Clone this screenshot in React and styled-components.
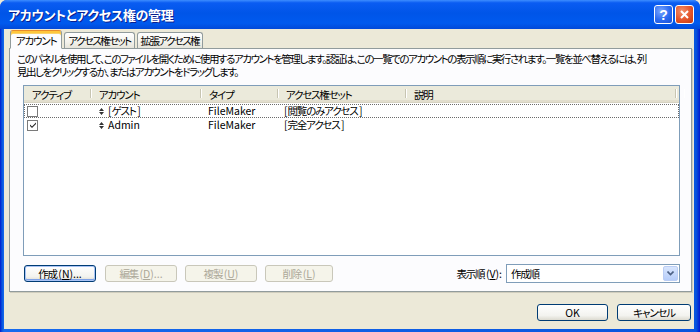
import React from 'react'
import styled, { createGlobalStyle } from 'styled-components'

const GlobalStyle = createGlobalStyle`
  html, body {
    margin: 0;
    padding: 0;
    background: #ece9d8;
  }
  body {
    font-family: "Noto Sans CJK JP", "Liberation Sans", sans-serif;
    font-size: 10.5px;
    letter-spacing: -1.2px;
    font-feature-settings: "palt";
    color: #000;
  }
`

const Window = styled.div`
  width: 700px;
  height: 332px;
  display: flex;
  flex-direction: column;
  background: #0a43d8;
  border-radius: 7px 7px 0 0;
  overflow: hidden;
`

const TitleBar = styled.div`
  height: 29px;
  flex: none;
  display: flex;
  align-items: center;
  padding: 0 6px 0 8px;
  background: linear-gradient(
    to bottom,
    #3d8dff 0%,
    #0a5cf2 10%,
    #0055e8 45%,
    #005aee 80%,
    #0149d8 100%
  );
  color: #fff;
`

const Title = styled.div`
  flex: 1;
  font-size: 13px;
  font-weight: bold;
  letter-spacing: -0.3px;
  text-shadow: 1px 1px 0 #0a1f8f;
`

const CaptionButtons = styled.div`
  display: flex;
  gap: 2px;
`

const CaptionButton = styled.div`
  width: 17px;
  height: 17px;
  border: 1px solid #fff;
  border-radius: 3px;
  display: flex;
  align-items: center;
  justify-content: center;
  color: #fff;
  font-family: "Liberation Sans", sans-serif;
  font-weight: bold;
  font-size: 14px;
  letter-spacing: 0;
  background: ${p => p.$close
    ? 'radial-gradient(circle at 35% 30%, #f2906c 0%, #e4542a 55%, #c23a12 100%)'
    : 'radial-gradient(circle at 35% 30%, #7aa6ff 0%, #2b6af0 55%, #1a4fd6 100%)'};
`

const Frame = styled.div`
  flex: 1;
  min-height: 0;
  display: flex;
  padding: 0 6px 3px 4px;
  background: linear-gradient(to right, #0019cf 0, #0855dd 2px, #166aee 4px, #0855dd calc(100% - 4px), #0019cf 100%);
`

const Client = styled.div`
  flex: 1;
  min-width: 0;
  display: flex;
  flex-direction: column;
  background: #ece9d8;
  padding: 1px 2px 0 5px;
`

const TabStrip = styled.div`
  display: flex;
  align-items: flex-end;
  height: 19px;
  margin-bottom: -1px;
  padding-left: 1px;
  position: relative;
  z-index: 1;
`

const Tab = styled.div`
  box-sizing: border-box;
  height: ${p => (p.$active ? 19 : 16)}px;
  margin: ${p => (p.$active ? '0' : '0 0 1px 2px')};
  padding: 0 ${p => (p.$active ? 5 : 3)}px;
  padding-top: ${p => (p.$active ? 2 : 0)}px;
  border: 1px solid #919b9c;
  border-bottom: ${p => (p.$active ? '1px solid #fcfcfe' : 'none')};
  border-top-color: ${p => (p.$active ? '#e68b2c' : '#919b9c')};
  border-radius: 3px 3px 0 0;
  background: ${p => (p.$active ? '#fcfcfe' : 'linear-gradient(#ffffff, #f3f2ec 60%, #e6e4da)')};
  box-shadow: ${p => (p.$active ? 'inset 0 2px 0 #ffc73c, inset 0 3px 0 #f9d46e' : 'none')};
  display: flex;
  align-items: center;
  letter-spacing: ${p => (p.$active ? '-1.2px' : '-1.6px')};
  white-space: nowrap;
`

const Panel = styled.div`
  height: 244px;
  min-width: 0;
  box-sizing: border-box;
  border: 1px solid #919b9c;
  background: #fcfcfe;
  box-shadow: 1px 1px 0 #d0cdbd;
  padding: 3px 11px 0 7px;
  display: flex;
  flex-direction: column;
  overflow: hidden;
`

const Description = styled.div`
  line-height: 13px;
  letter-spacing: -1.45px;
  white-space: nowrap;
`

const Latin = styled.span`
  letter-spacing: 0;
  margin-left: ${p => (p.$after ? 1.5 : 0)}px;
`

const ListView = styled.div`
  margin: 7px 0 0 6px;
  height: 171px;
  box-sizing: border-box;
  border: 1px solid #7f9db9;
  background: #fff;
`

const COLS = '67px 110px 77px 128px 270px 1fr'

const Header = styled.div`
  display: grid;
  grid-template-columns: ${COLS};
  height: 17px;
  box-sizing: border-box;
  background: #ebeadb;
  border-bottom: 1px solid #d6d2c2;
  box-shadow: inset 0 -2px 0 #e2decd;
`

const HeaderCell = styled.div`
  display: flex;
  align-items: center;
  padding-left: 8px;
  white-space: nowrap;
  position: relative;
  &::after {
    content: "";
    position: absolute;
    right: 0;
    top: 3px;
    bottom: 4px;
    width: 1px;
    background: ${p => (p.$last ? 'transparent' : '#c7c5b2')};
    box-shadow: 1px 0 0 #fff;
  }
`

const Row = styled.div`
  display: grid;
  grid-template-columns: ${COLS};
  height: 14px;
  margin-top: ${p => (p.$first ? 1 : 0)}px;
  outline: ${p => (p.$focus ? '1px dotted #6b6b6b' : 'none')};
  outline-offset: -1px;
`

const Cell = styled.div`
  display: flex;
  align-items: center;
  gap: 4px;
  padding-left: ${p => p.$pad ?? 6}px;
  letter-spacing: ${p => (p.$latin ? '0' : '-1.2px')};
  white-space: nowrap;
  line-height: 14px;
`

const CheckBox = styled.div`
  width: 9px;
  height: 9px;
  border: 1px solid #7a7a7a;
  background: #fff;
  display: flex;
  align-items: center;
  justify-content: center;
`

const ButtonBar = styled.div`
  display: flex;
  align-items: center;
  margin: 8px 0 0 7px;
`

const PushButton = styled.div`
  box-sizing: border-box;
  flex: none;
  width: ${p => p.$w}px;
  height: 17px;
  margin-right: ${p => p.$gap ?? 0}px;
  border: 1px solid ${p => (p.$disabled ? '#c9c7ba' : '#003c74')};
  border-radius: 3px;
  background: ${p => (p.$disabled ? '#f5f4ea' : 'linear-gradient(#ffffff, #f3f3ef 70%, #dcdad0)')};
  box-shadow: ${p => (p.$default ? 'inset 0 0 0 1px #a9c3f5, inset 0 -1px 0 1px #7fa2e7' : 'none')};
  color: ${p => (p.$disabled ? '#aca899' : '#000')};
  display: flex;
  align-items: center;
  justify-content: center;
  letter-spacing: ${p => (p.$latin ? '0' : '-1.2px')};
  white-space: nowrap;
  u {
    text-decoration: underline;
  }
`

const Spacer = styled.div`
  flex: 1;
`

const SortLabel = styled.div`
  margin-right: 4px;
  u {
    text-decoration: underline;
  }
`

const Combo = styled.div`
  box-sizing: border-box;
  width: 174px;
  height: 19px;
  border: 1px solid #7f9db9;
  background: #fff;
  display: flex;
  align-items: center;
  padding: 1px;
`

const ComboText = styled.div`
  flex: 1;
  padding-left: 3px;
`

const ComboArrow = styled.div`
  width: 15px;
  height: 15px;
  box-sizing: border-box;
  border: 1px solid #bacdf5;
  border-radius: 2px;
  background: linear-gradient(#d8e5fd, #b6cdfa);
  display: flex;
  align-items: center;
  justify-content: center;
`

const Footer = styled.div`
  display: flex;
  justify-content: flex-end;
  margin-top: 12px;
  padding-right: 1px;
`

const Handle = () => (
  <svg width="5" height="7" viewBox="0 0 5 7">
    <path d="M2.5 0 L5 3 L0 3 Z M0 4 L5 4 L2.5 7 Z" fill="#333" />
  </svg>
)

const Check = () => (
  <svg width="8" height="8" viewBox="0 0 8 8">
    <path d="M1 3.5 L3 5.5 L7 1.5 L7 3 L3 7 L1 5 Z" fill="#222" />
  </svg>
)

const Bracketed = ({ children }) => (
  <span>
    <Latin>[</Latin>
    {children}
    <Latin $after>]</Latin>
  </span>
)

const accounts = [
  { active: false, name: <Bracketed>ゲスト</Bracketed>, key: 'guest', type: 'FileMaker', set: '閲覧のみアクセス', focus: true },
  { active: true, name: 'Admin', key: 'admin', type: 'FileMaker', set: '完全アクセス', latin: true },
]

const columns = ['アクティブ', 'アカウント', 'タイプ', 'アクセス権セット', '説明', '']

const Mnemonic = ({ k, dots }) => (
  <Latin $after>
    (<u>{k}</u>){dots ? '...' : ''}
  </Latin>
)

export default function App() {
  return (
    <>
      <GlobalStyle />
      <Window>
        <TitleBar>
          <Title>アカウントとアクセス権の管理</Title>
          <CaptionButtons>
            <CaptionButton>?</CaptionButton>
            <CaptionButton $close>
              <svg width="9" height="9" viewBox="0 0 9 9">
                <path d="M1 1 L8 8 M8 1 L1 8" stroke="#fff" strokeWidth="2" />
              </svg>
            </CaptionButton>
          </CaptionButtons>
        </TitleBar>
        <Frame>
          <Client>
            <TabStrip>
              <Tab $active>アカウント</Tab>
              <Tab>アクセス権セット</Tab>
              <Tab>拡張アクセス権</Tab>
            </TabStrip>
            <Panel>
              <Description>
                このパネルを使用して、このファイルを開くために使用するアカウントを管理します。認証は、この一覧でのアカウントの表示順に実行されます。一覧を並べ替えるには、列
                <br />
                見出しをクリックするか、またはアカウントをドラッグします。
              </Description>
              <ListView>
                <Header>
                  {columns.map((c, i) => (
                    <HeaderCell key={i} $last={i === columns.length - 1}>{c}</HeaderCell>
                  ))}
                </Header>
                {accounts.map((a, i) => (
                  <Row key={a.key} $first={i === 0} $focus={a.focus}>
                    <Cell $pad={3}>
                      <CheckBox>{a.active && <Check />}</CheckBox>
                    </Cell>
                    <Cell $pad={8} $latin={a.latin}>
                      <Handle />
                      {a.name}
                    </Cell>
                    <Cell $pad={7} $latin>{a.type}</Cell>
                    <Cell $pad={6}>
                      <Bracketed>{a.set}</Bracketed>
                    </Cell>
                    <Cell />
                    <Cell />
                  </Row>
                ))}
              </ListView>
              <ButtonBar>
                <PushButton $w={72} $gap={9} $default>作成<Mnemonic k="N" dots /></PushButton>
                <PushButton $w={72} $gap={8} $disabled>編集<Mnemonic k="D" dots /></PushButton>
                <PushButton $w={72} $gap={8} $disabled>複製<Mnemonic k="U" /></PushButton>
                <PushButton $w={68} $disabled>削除<Mnemonic k="L" /></PushButton>
                <Spacer />
                <SortLabel>表示順<Latin $after>(<u>V</u>):</Latin></SortLabel>
                <Combo>
                  <ComboText>作成順</ComboText>
                  <ComboArrow>
                    <svg width="7" height="5" viewBox="0 0 7 5">
                      <path d="M0.5 0.5 L3.5 3.5 L6.5 0.5" stroke="#4d6185" strokeWidth="1.6" fill="none" />
                    </svg>
                  </ComboArrow>
                </Combo>
              </ButtonBar>
            </Panel>
            <Footer>
              <PushButton $w={71} $gap={9} $latin>OK</PushButton>
              <PushButton $w={74}>キャンセル</PushButton>
            </Footer>
          </Client>
        </Frame>
      </Window>
    </>
  )
}
